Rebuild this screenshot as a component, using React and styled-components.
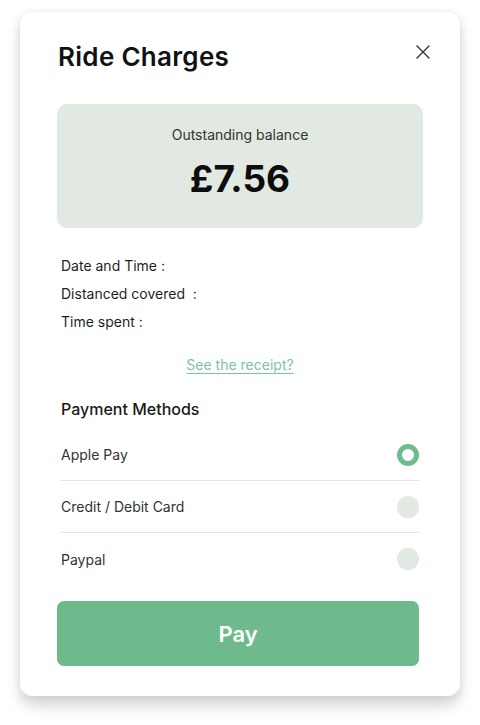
import styled, { createGlobalStyle } from "styled-components";

const GlobalStyle = createGlobalStyle`
  body {
    margin: 0;
    background: #ffffff;
    font-family: "Inter", "Liberation Sans", sans-serif;
    color: #1a1a1a;
  }
`;

const Page = styled.div`
  padding: 12px 20px 29px;
`;

const Card = styled.div`
  width: 440px;
  box-sizing: border-box;
  padding: 28px 37px 30px;
  background: #fff;
  border-radius: 12px;
  box-shadow: 0 10px 14px rgba(0, 0, 0, 0.16), 0 0 8px rgba(0, 0, 0, 0.07);
  display: flex;
  flex-direction: column;
`;

const Header = styled.div`
  display: flex;
  align-items: center;
  justify-content: space-between;
  height: 32px;
  padding-left: 1px;
  margin-bottom: 32px;
`;

const Title = styled.h1`
  margin: 0;
  font-size: 26px;
  font-weight: 600;
  letter-spacing: 0.3px;
  color: #111;
`;

const CloseButton = styled.button`
  background: none;
  border: none;
  padding: 0;
  margin: 0 -8px 8px 0;
  width: 16px;
  height: 16px;
  display: flex;
  align-items: center;
  justify-content: center;
  cursor: pointer;
`;

const BalanceBox = styled.div`
  height: 124px;
  background: #e1e9e2;
  border-radius: 10px;
  display: flex;
  flex-direction: column;
  align-items: center;
  padding-top: 22px;
  box-sizing: border-box;
`;

const BalanceLabel = styled.p`
  margin: 0;
  font-size: 14px;
  line-height: 18px;
  color: #333;
`;

const BalanceAmount = styled.p`
  margin: 13px 0 0;
  font-size: 37px;
  line-height: 44px;
  font-weight: 700;
  color: #0d0d0d;
`;

const Details = styled.div`
  margin-top: 24px;
  padding-left: 4px;
  display: flex;
  flex-direction: column;
`;

const DetailRow = styled.p`
  margin: 0;
  font-size: 14px;
  line-height: 28px;
  color: #1f1f1f;
  white-space: pre;
`;

const ReceiptLink = styled.a`
  align-self: center;
  margin-top: 19px;
  font-size: 14px;
  line-height: 20px;
  color: #7cc59a;
  text-decoration: underline;
  text-underline-offset: 3px;
  cursor: pointer;
`;

const SectionTitle = styled.h2`
  margin: 23px 0 9px;
  padding-left: 4px;
  font-size: 16px;
  line-height: 22px;
  font-weight: 500;
  color: #1a1a1a;
`;

const MethodList = styled.div`
  display: flex;
  flex-direction: column;
  margin: 0 4px 0 4px;
`;

const MethodRow = styled.label`
  display: flex;
  align-items: center;
  justify-content: space-between;
  height: 52px;
  box-sizing: border-box;
  border-bottom: ${(p) => (p.$last ? "none" : "1px solid #dfe4e1")};
  font-size: 14px;
  color: #333;
  cursor: pointer;
`;

const Radio = styled.span`
  width: 22px;
  height: 22px;
  border-radius: 50%;
  box-sizing: border-box;
  background: ${(p) => (p.$checked ? "#fff" : "#e1e9e2")};
  border: ${(p) => (p.$checked ? "5px solid #6fbb8d" : "none")};
`;

const PayButton = styled.button`
  margin-top: 16px;
  width: 362px;
  height: 65px;
  border: none;
  border-radius: 7px;
  background: #6fba8d;
  color: #fff;
  font-family: inherit;
  font-size: 22px;
  font-weight: 600;
  cursor: pointer;
`;

const methods = ["Apple Pay", "Credit / Debit Card", "Paypal"];

export default function App() {
  return (
    <Page>
      <GlobalStyle />
      <Card>
        <Header>
          <Title>Ride Charges</Title>
          <CloseButton aria-label="Close">
            <svg width="14" height="14" viewBox="0 0 14 14">
              <path d="M1 1 L13 13 M13 1 L1 13" stroke="#333" strokeWidth="1.4" strokeLinecap="round" />
            </svg>
          </CloseButton>
        </Header>

        <BalanceBox>
          <BalanceLabel>Outstanding balance</BalanceLabel>
          <BalanceAmount>£7.56</BalanceAmount>
        </BalanceBox>

        <Details>
          <DetailRow>Date and Time :</DetailRow>
          <DetailRow>Distanced covered  :</DetailRow>
          <DetailRow>Time spent :</DetailRow>
        </Details>

        <ReceiptLink>See the receipt?</ReceiptLink>

        <SectionTitle>Payment Methods</SectionTitle>
        <MethodList>
          {methods.map((m, i) => (
            <MethodRow key={m} $last={i === methods.length - 1}>
              <span>{m}</span>
              <Radio $checked={i === 0} />
            </MethodRow>
          ))}
        </MethodList>

        <PayButton>Pay</PayButton>
      </Card>
    </Page>
  );
}
